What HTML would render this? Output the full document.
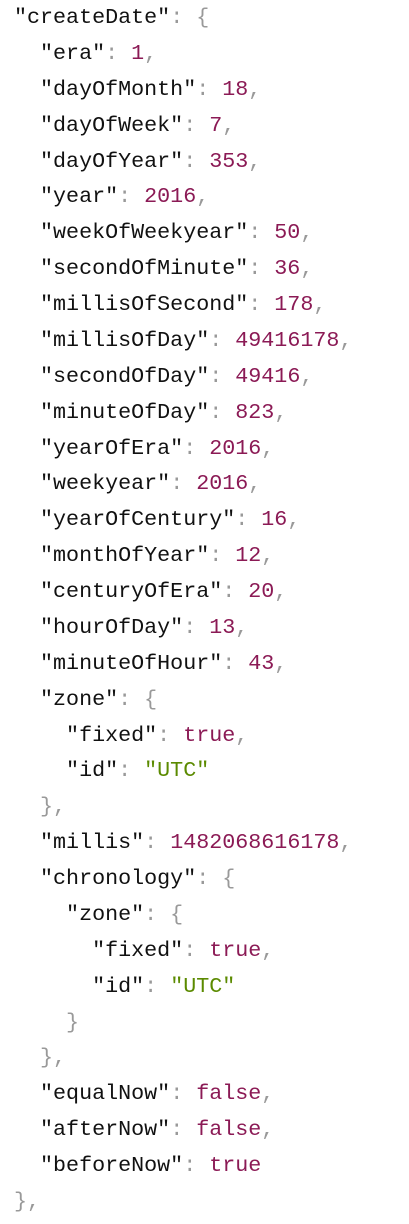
<!DOCTYPE html>
<html><head><meta charset="utf-8"><style>
html,body{margin:0;padding:0;background:#fff;width:409px;height:1224px;overflow:hidden}
pre{margin:0 0 0 14px;font-family:"Liberation Mono",monospace;font-size:21.7px;line-height:35.88px;color:#111}
.p{color:#999}.n{color:#8b1a55}.s{color:#5b8a00}
</style></head><body><pre>"createDate"<span class="p">: {</span>
  "era"<span class="p">: </span><span class="n">1</span><span class="p">,</span>
  "dayOfMonth"<span class="p">: </span><span class="n">18</span><span class="p">,</span>
  "dayOfWeek"<span class="p">: </span><span class="n">7</span><span class="p">,</span>
  "dayOfYear"<span class="p">: </span><span class="n">353</span><span class="p">,</span>
  "year"<span class="p">: </span><span class="n">2016</span><span class="p">,</span>
  "weekOfWeekyear"<span class="p">: </span><span class="n">50</span><span class="p">,</span>
  "secondOfMinute"<span class="p">: </span><span class="n">36</span><span class="p">,</span>
  "millisOfSecond"<span class="p">: </span><span class="n">178</span><span class="p">,</span>
  "millisOfDay"<span class="p">: </span><span class="n">49416178</span><span class="p">,</span>
  "secondOfDay"<span class="p">: </span><span class="n">49416</span><span class="p">,</span>
  "minuteOfDay"<span class="p">: </span><span class="n">823</span><span class="p">,</span>
  "yearOfEra"<span class="p">: </span><span class="n">2016</span><span class="p">,</span>
  "weekyear"<span class="p">: </span><span class="n">2016</span><span class="p">,</span>
  "yearOfCentury"<span class="p">: </span><span class="n">16</span><span class="p">,</span>
  "monthOfYear"<span class="p">: </span><span class="n">12</span><span class="p">,</span>
  "centuryOfEra"<span class="p">: </span><span class="n">20</span><span class="p">,</span>
  "hourOfDay"<span class="p">: </span><span class="n">13</span><span class="p">,</span>
  "minuteOfHour"<span class="p">: </span><span class="n">43</span><span class="p">,</span>
  "zone"<span class="p">: {</span>
    "fixed"<span class="p">: </span><span class="n">true</span><span class="p">,</span>
    "id"<span class="p">: </span><span class="s">"UTC"</span>
<span class="p">  },</span>
  "millis"<span class="p">: </span><span class="n">1482068616178</span><span class="p">,</span>
  "chronology"<span class="p">: {</span>
    "zone"<span class="p">: {</span>
      "fixed"<span class="p">: </span><span class="n">true</span><span class="p">,</span>
      "id"<span class="p">: </span><span class="s">"UTC"</span>
<span class="p">    }</span>
<span class="p">  },</span>
  "equalNow"<span class="p">: </span><span class="n">false</span><span class="p">,</span>
  "afterNow"<span class="p">: </span><span class="n">false</span><span class="p">,</span>
  "beforeNow"<span class="p">: </span><span class="n">true</span>
<span class="p">},</span></pre></body></html>
